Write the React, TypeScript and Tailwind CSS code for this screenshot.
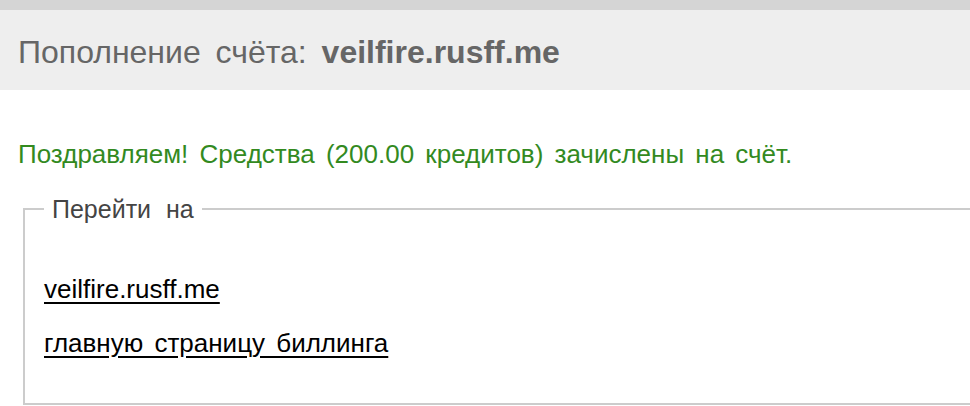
export default function App() {
  return (
    <div className="w-[970px] h-[406px] overflow-hidden bg-white font-['Liberation_Sans',Arial,sans-serif]">
      <div className="h-[10px] bg-[#d5d5d5]" />
      <div className="h-[80px] bg-[#eeeeee] flex items-center pl-[18px] pt-[4px]">
        <h1 className="text-[32px] leading-none text-[#666666] [word-spacing:6px]">
          Пополнение счёта: <b className="font-bold">veilfire.rusff.me</b>
        </h1>
      </div>

      <p className="mt-[49px] pl-[18px] text-[26px] leading-[30px] text-[#338a1f] [word-spacing:4px]">
        Поздравляем! Средства (200.00 кредитов) зачислены на счёт.
      </p>

      <fieldset className="mt-[27px] ml-[23px] w-[1000px] h-[209px] border-2 border-[#cccccc] px-[19px]">
        <legend className="px-[8px] text-[25px] leading-[26px] text-[#444444] [word-spacing:8px]">Перейти на</legend>
        <div className="flex flex-col gap-[26px] pt-[53px] text-[26px] leading-[28px] text-black [word-spacing:4px]">
          <a href="#" className="underline underline-offset-[4px] self-start">veilfire.rusff.me</a>
          <a href="#" className="underline underline-offset-[4px] self-start">главную страницу биллинга</a>
        </div>
      </fieldset>
    </div>
  )
}
